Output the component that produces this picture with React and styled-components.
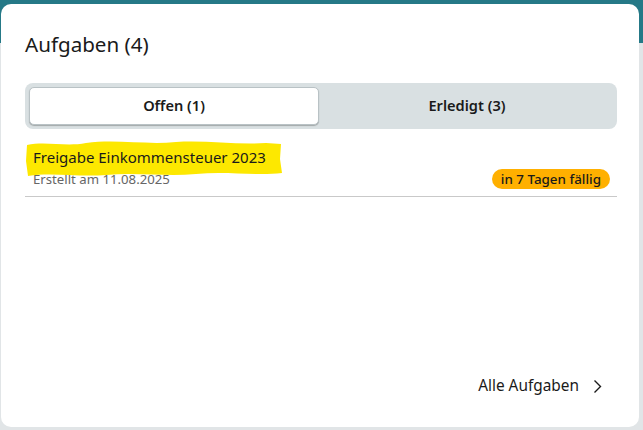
import React from "react";
import styled, { createGlobalStyle } from "styled-components";

const Global = createGlobalStyle`
  html, body { margin: 0; padding: 0; }
  body {
    font-family: "Noto Sans", "Open Sans", sans-serif;
    background: linear-gradient(#257987 0, #257987 43px, #e1e5e7 43px);
    height: 430px;
    overflow: hidden;
  }
`;

const Card = styled.div`
  box-sizing: border-box;
  margin: 4px 4px 0 1px;
  height: 423px;
  background: #fff;
  border-radius: 10px;
  padding: 26px 22px 0 24px;
  display: flex;
  flex-direction: column;
  color: #1c1c1c;
`;

const Title = styled.h2`
  margin: 0;
  font-size: 20.6px;
  line-height: 28px;
  font-weight: 400;
  color: #1a1a1a;
`;

const Tabs = styled.div`
  margin-top: 25px;
  height: 46px;
  box-sizing: border-box;
  padding: 4px;
  background: #d9e0e2;
  border-radius: 8px;
  display: grid;
  grid-template-columns: 1fr 1fr;
`;

const Tab = styled.button`
  font-family: inherit;
  font-size: 14.6px;
  font-weight: 600;
  color: #1a1a1a;
  border-radius: 5px;
  border: 1px solid ${(p) => (p.$active ? "#b9c2c5" : "transparent")};
  background: ${(p) => (p.$active ? "#fff" : "transparent")};
  box-shadow: ${(p) => (p.$active ? "0 1px 1px rgba(0,0,0,0.25)" : "none")};
  margin-right: ${(p) => (p.$active ? "2px" : "0")};
  padding: 0 0 3px;
  cursor: pointer;
`;

const List = styled.div`
  flex: 1;
  margin-top: 17px;
`;

const Item = styled.div`
  border-bottom: 1px solid #c9c9c9;
  padding: 0 7px 7px 8px;
`;

const ItemTitle = styled.div`
  position: relative;
  display: inline-block;
  font-size: 15px;
  line-height: 22px;
  color: #1a1a1a;
`;

const TitleText = styled.span`
  position: relative;
`;

const Marker = styled.svg`
  position: absolute;
  left: -7px;
  top: -7px;
  width: 256px;
  height: 38px;
`;

const MetaRow = styled.div`
  display: flex;
  justify-content: space-between;
  align-items: center;
  margin-top: 1px;
`;

const Meta = styled.span`
  font-size: 13.2px;
  line-height: 18px;
  color: #666;
`;

const Badge = styled.span`
  background: #ffb000;
  color: #1a1a1a;
  font-size: 13.4px;
  font-weight: 500;
  line-height: 20px;
  padding: 0 9px;
  border-radius: 10px;
`;

const Footer = styled.div`
  display: flex;
  justify-content: flex-end;
  align-items: center;
  gap: 14px;
  padding: 0 15px 30px 0;
  font-size: 15.4px;
  line-height: 22px;
  color: #1a1a1a;
`;

export default function App() {
  return (
    <>
      <Global />
      <Card>
        <Title>Aufgaben (4)</Title>
        <Tabs>
          <Tab $active>Offen (1)</Tab>
          <Tab>Erledigt (3)</Tab>
        </Tabs>
        <List>
          <Item>
            <ItemTitle>
              <Marker viewBox="0 0 256 38" preserveAspectRatio="none">
                <path
                  d="M1 6 C20 2 40 8 60 4 C90 0 120 6 150 3 C180 1 210 6 240 4 L255 5 L254 20 L256 34 C230 37 200 32 170 35 C140 38 110 33 80 36 C50 38 25 33 2 37 L0 22 Z"
                  fill="#fde800"
                />
              </Marker>
              <TitleText>Freigabe Einkommensteuer 2023</TitleText>
            </ItemTitle>
            <MetaRow>
              <Meta>Erstellt am 11.08.2025</Meta>
              <Badge>in 7 Tagen fällig</Badge>
            </MetaRow>
          </Item>
        </List>
        <Footer>
          <span>Alle Aufgaben</span>
          <svg width="9" height="15" viewBox="0 0 9 15">
            <path d="M1.5 1.5 L7.5 7.5 L1.5 13.5" fill="none" stroke="#1a1a1a" strokeWidth="1.4" />
          </svg>
        </Footer>
      </Card>
    </>
  );
}
